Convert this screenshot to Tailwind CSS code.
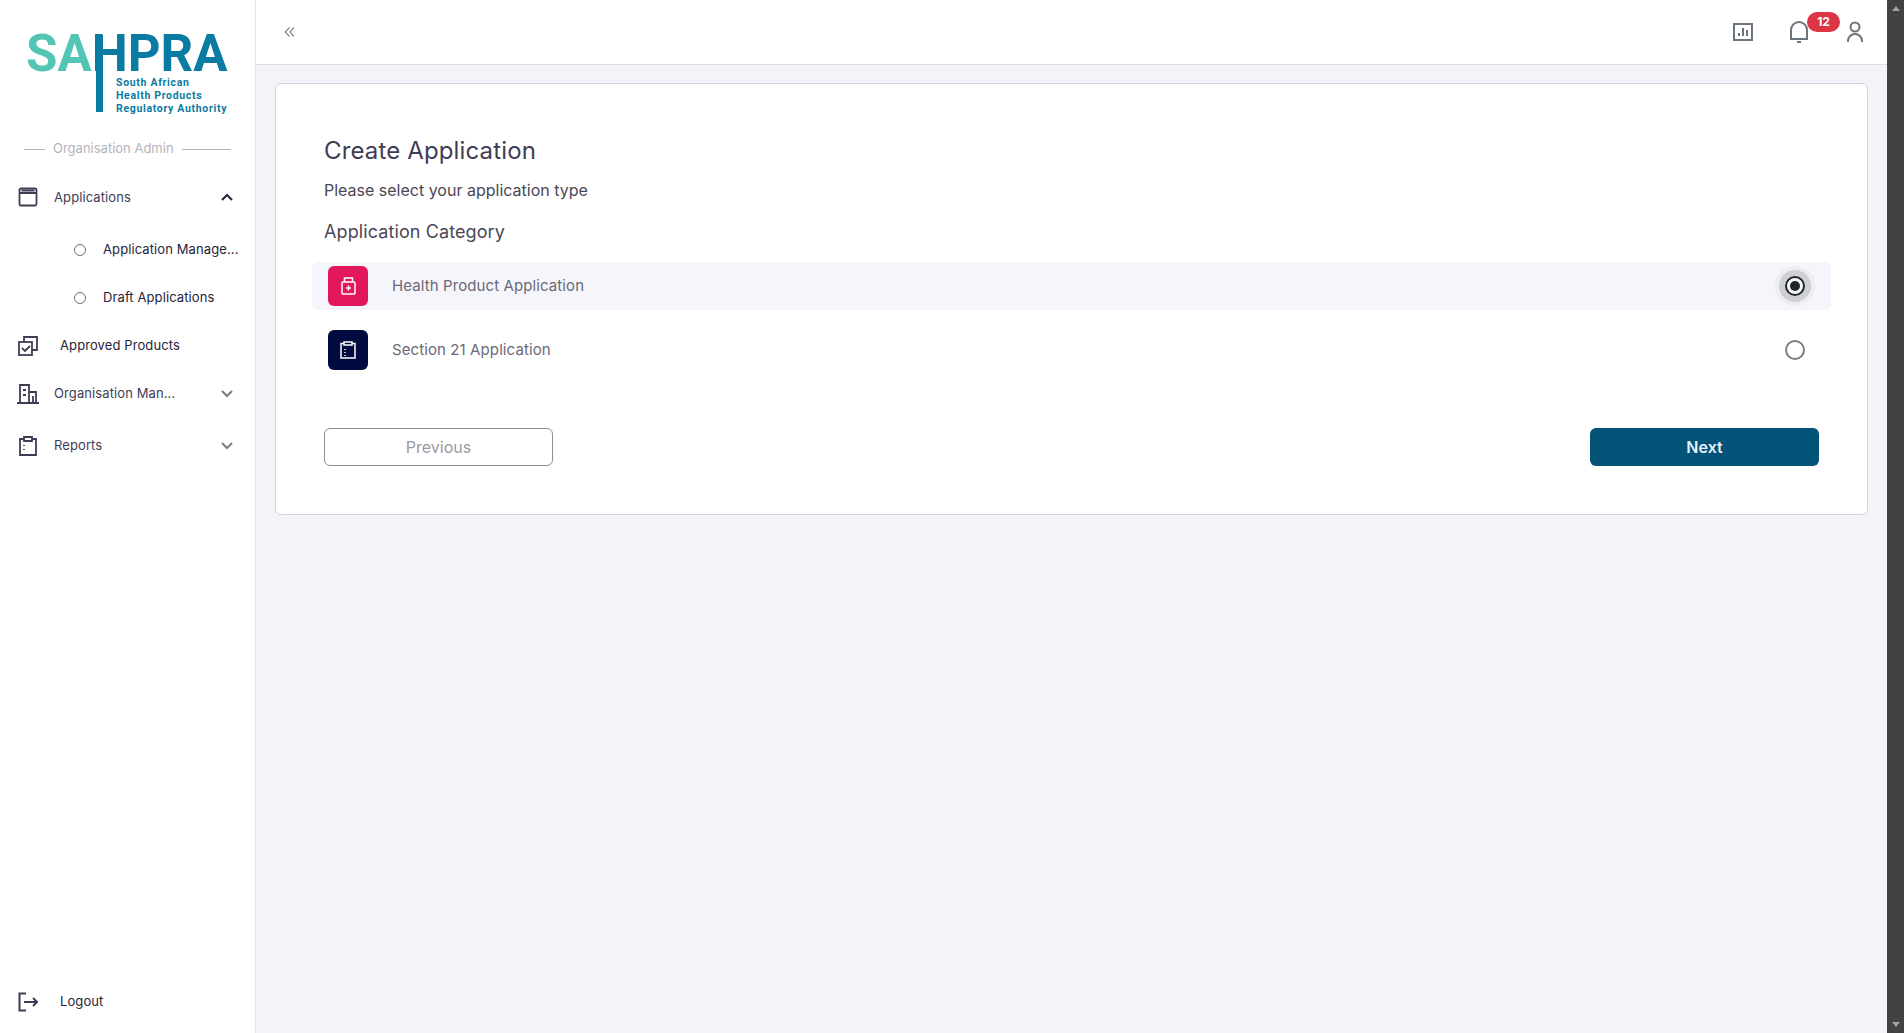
<!DOCTYPE html>
<html lang="en">
<head>
  <meta charset="UTF-8" />
  <meta name="viewport" content="width=device-width, initial-scale=1.0" />
  <title>Create Application</title>
  <script src="https://cdn.jsdelivr.net/npm/@tailwindcss/browser@4"></script>
</head>
<body class="h-[1033px] overflow-hidden flex bg-[#f3f4f9] font-['Inter',sans-serif] text-[#3f3d56]">
  <!-- sidebar -->
  <aside class="w-[256px] h-full shrink-0 bg-white border-r border-[#e4e5ec] flex flex-col">
    <div class="relative h-[136px] shrink-0">
      <div class="absolute left-[26px] top-[34px] font-['Roboto',sans-serif] font-bold text-[51px] leading-[40px] whitespace-nowrap"><span class="text-[#53c5b4]">SA</span><span class="text-[#0a7ba3]">HPRA</span></div>
      <div class="absolute left-[96px] top-[35px] w-[7px] h-[77px] bg-[#0a7ba3]"></div>
      <div class="absolute left-[116px] top-[76px] font-['Roboto',sans-serif] font-bold text-[10.5px] leading-[13px] tracking-[0.68px] text-[#0a7ba3] whitespace-nowrap">South African<br />Health Products<br />Regulatory Authority</div>
    </div>
    <div class="flex items-center h-[26px] pl-[24px] text-[13px] text-[#b5b3bc]">
      <span class="w-[21px] h-px bg-[#b5b3bc]"></span>
      <span class="mx-[8px]">Organisation Admin</span>
      <span class="w-[49px] h-px bg-[#b5b3bc]"></span>
    </div>
    <nav class="text-[13px] font-normal tracking-[0.1px]">
      <div class="flex items-center h-[52px] mt-[10px] pl-[18px] pr-[21px]">
        <svg class="w-[20px] h-[20px] mr-[16px] -mt-[2px]" viewBox="0 0 20 20" fill="none" stroke="#3f3d56" stroke-width="1.8"><rect x="1.5" y="1.5" width="17" height="17" rx="1.5" /><path d="M1.5 6h17M3.5 3.5h13" /></svg>
        <span class="flex-1">Applications</span>
        <svg class="w-[14px] h-[14px] -mt-[2px]" viewBox="0 0 14 14" fill="none" stroke="#26243a" stroke-width="2"><path d="M2 10l5-5 5 5" /></svg>
      </div>
      <div class="flex items-center h-[48px] mt-[2px] pl-[74px] text-[#26243a]">
        <span class="w-[12px] h-[12px] rounded-full border border-[#6f6d7c] mr-[17px]"></span>
        <span class="whitespace-nowrap">Application Manage...</span>
      </div>
      <div class="flex items-center h-[48px] pl-[74px] text-[#26243a]">
        <span class="w-[12px] h-[12px] rounded-full border border-[#6f6d7c] mr-[17px]"></span>
        <span>Draft Applications</span>
      </div>
      <div class="flex items-center h-[48px] pl-[18px] text-[#26243a]">
        <svg class="w-[20px] h-[20px] mr-[22px] -mt-[1px]" viewBox="0 0 20 20" fill="none" stroke="#3f3d56" stroke-width="1.8"><path d="M6 6V1h13v13h-5" /><rect x="1" y="6" width="13" height="13" /><path d="M4 12l3 3 5-5" /></svg>
        <span>Approved Products</span>
      </div>
      <div class="flex items-center h-[48px] pl-[18px] pr-[21px]">
        <svg class="w-[22px] h-[20px] mr-[15px] -ml-[1px]" viewBox="0 0 22 20" fill="none" stroke="#3f3d56" stroke-width="1.8"><path d="M0 19h22M3 19V1h9v18M12 8h7v11M6 6h3M6 11h3M16 12v7" /></svg>
        <span class="flex-1">Organisation Man...</span>
        <svg class="w-[14px] h-[14px]" viewBox="0 0 14 14" fill="none" stroke="#7c7a86" stroke-width="2"><path d="M2 4l5 5 5-5" /></svg>
      </div>
      <div class="flex items-center h-[52px] mt-[2px] pl-[18px] pr-[21px]">
        <svg class="w-[20px] h-[20px] mr-[16px] -mt-[1px]" viewBox="0 0 20 20" fill="none" stroke="#3f3d56" stroke-width="1.8"><path d="M6 3H2v16h16V3h-4" /><path d="M6 1h8v4H6zM6 9v1M6 13v1" /></svg>
        <span class="flex-1">Reports</span>
        <svg class="w-[14px] h-[14px]" viewBox="0 0 14 14" fill="none" stroke="#7c7a86" stroke-width="2"><path d="M2 4l5 5 5-5" /></svg>
      </div>
    </nav>
    <div class="mt-auto flex items-center h-[64px] -mb-[1px] pl-[18px] text-[13px] font-normal tracking-[0.1px] text-[#26243a]">
      <svg class="w-[20px] h-[20px] mr-[22px]" viewBox="0 0 20 20" fill="none" stroke="#3f3d56" stroke-width="2"><path d="M8 1.5H1.5v17H8M6 10h13M15 6l4 4-4 4" /></svg>
      <span>Logout</span>
    </div>
  </aside>

  <div class="flex-1 h-full flex flex-col min-w-0">
    <!-- top bar -->
    <header class="h-[65px] shrink-0 bg-white border-b border-[#dcdde3] flex items-center pl-[28px] pr-[24px]">
      <svg class="w-[12px] h-[12px] -mt-[1px]" viewBox="0 0 12 12" fill="none" stroke="#5d6670" stroke-width="1.1"><path d="M5.5 1.5L1.5 6l4 4.5M10 1.5L6 6l4 4.5" /></svg>
      <div class="ml-auto flex items-center relative">
        <svg class="w-[20px] h-[18px] mr-[37px]" viewBox="0 0 20 18" fill="none" stroke="#6c757d" stroke-width="2"><rect x="1" y="1" width="18" height="16" /><path d="M6 13v-3M10 13V5M14 13V7" /></svg>
        <svg class="w-[18px] h-[22px] mr-[39px]" viewBox="0 0 18 22" fill="none" stroke="#6c757d" stroke-width="2"><path d="M1 18V9a8 8 0 0116 0v9zM7 21h4" /></svg>
        <svg class="w-[16px] h-[21px] -mt-[2px]" viewBox="0 0 16 21" fill="none" stroke="#6c757d" stroke-width="2"><circle cx="8" cy="6" r="4.5" /><path d="M1 21v-1a7 7 0 0114 0v1" /></svg>
        <span class="absolute left-[74px] -top-[9px] w-[33px] h-[20px] rounded-full bg-[#dc3545] text-white text-[12px] font-bold leading-[20px] text-center">12</span>
      </div>
    </header>

    <main class="flex-1 pt-[18px] pl-[19px] pr-[19px]">
      <section class="h-[432px] bg-white border border-[#d5d6dc] rounded-[6px] pt-[49px] pl-[36px] pr-[36px]">
        <div class="pl-[12px]">
          <h1 class="text-[24px] leading-[36px] font-normal tracking-[0.14px] text-[#3f3d56]">Create Application</h1>
          <p class="text-[16px] leading-[24px] mt-[9px] text-[#4a4855]">Please select your application type</p>
          <h2 class="text-[18px] leading-[28px] mt-[16px] font-normal tracking-[0.1px] text-[#4a4855]">Application Category</h2>
        </div>
        <div class="mt-[16px]">
          <div class="h-[48px] rounded-[6px] bg-[#f5f6fb] flex items-center pl-[16px] pr-[26px]">
            <span class="w-[40px] h-[40px] rounded-[6px] bg-[#e3175c] flex items-center justify-center mr-[24px]">
              <svg class="w-[15px] h-[18px]" viewBox="0 0 15 18" fill="none" stroke="#fff" stroke-width="1.5"><path d="M3.5 1h8v4h-8zM2 5h11a1 1 0 011 1v10a1 1 0 01-1 1H2a1 1 0 01-1-1V6a1 1 0 011-1zM7.5 8.5v5M5 11h5" /></svg>
            </span>
            <span class="flex-1 text-[15px] tracking-[0.1px] text-[#6b6976]">Health Product Application</span>
            <span class="w-[20px] h-[20px] rounded-full border-2 border-[#212529] flex items-center justify-center shadow-[0_0_0_6px_#cfd0d4,0_0_0_10px_#eceef2]">
              <span class="w-[10px] h-[10px] rounded-full bg-[#212529]"></span>
            </span>
          </div>
          <div class="h-[48px] mt-[16px] flex items-center pl-[16px] pr-[26px]">
            <span class="w-[40px] h-[40px] rounded-[6px] bg-[#020b40] flex items-center justify-center mr-[24px]">
              <svg class="w-[16px] h-[18px]" viewBox="0 0 16 18" fill="none" stroke="#fff" stroke-width="1.5"><path d="M4 2.5H1V17h14V2.5h-3" /><path d="M4 1h8v3H4zM5 8v1M5 11v1M5 14v1" /></svg>
            </span>
            <span class="flex-1 text-[15px] tracking-[0.1px] text-[#6b6976]">Section 21 Application</span>
            <span class="w-[20px] h-[20px] rounded-full border-2 border-[#7d7d7f]"></span>
          </div>
        </div>
        <div class="flex justify-between mt-[54px] px-[12px]">
          <button class="w-[229px] h-[38px] rounded-[6px] border border-[#8f8e96] bg-white text-[16px] text-[#9a99a1]">Previous</button>
          <button class="w-[229px] h-[38px] rounded-[6px] bg-[#035378] text-[16px] font-semibold text-[#e6f0f5]">Next</button>
        </div>
      </section>
    </main>
  </div>

  <div class="w-[17px] h-full shrink-0 bg-[#424242] flex flex-col justify-between items-center py-[6px]">
    <span class="w-0 h-0 border-x-[4.5px] border-x-transparent border-b-[5px] border-b-[#a3a3a3]"></span>
    <span class="w-0 h-0 border-x-[4.5px] border-x-transparent border-t-[5px] border-t-[#a3a3a3]"></span>
  </div>
</body>
</html>
